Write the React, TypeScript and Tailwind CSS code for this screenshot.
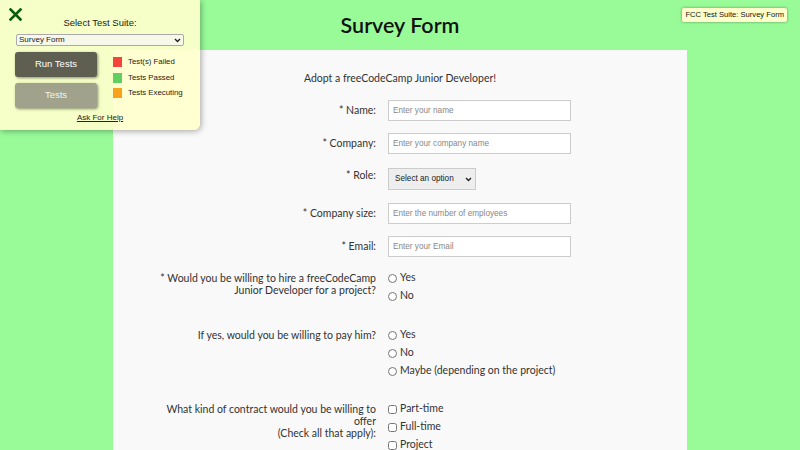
import { useState } from "react";

const font = { fontFamily: "Lato, 'Open Sans', sans-serif" };
const arial = { fontFamily: "'Liberation Sans', Arial, sans-serif" };

function Chevron({ className = "" }: { className?: string }) {
  return (
    <svg className={className} width="7" height="5" viewBox="0 0 7 5">
      <path d="M1 1 L3.5 3.5 L6 1" fill="none" stroke="#222" strokeWidth="1.4" />
    </svg>
  );
}

function TestPanel() {
  const [suite, setSuite] = useState("Survey Form");
  return (
    <div
      className="absolute left-0 top-0 w-[200px] h-[130px] bg-[rgba(255,255,204,0.9)] rounded-br-md shadow-[1px_1px_6px_rgba(0,0,0,0.35)] text-[#222]"
      style={arial}
    >
      <svg className="absolute left-[9px] top-[8px]" width="13" height="13" viewBox="0 0 13 13">
        <path d="M1.5 1.5 L11.5 11.5 M11.5 1.5 L1.5 11.5" stroke="#0a5c0a" strokeWidth="2.6" strokeLinecap="square" />
      </svg>
      <div className="pt-[16px] text-center text-[9.5px] leading-[14px]">Select Test Suite:</div>
      <div className="relative mx-[16px] mt-[4px]">
        <select
          value={suite}
          onChange={(e) => setSuite(e.target.value)}
          className="block w-full h-[12px] appearance-none text-[8px] leading-[10px] bg-[#f7f7ea] border border-[#aaa] rounded-[2px] px-[2px] py-0"
        >
          <option>Survey Form</option>
        </select>
        <Chevron className="absolute right-[3px] top-[4px] pointer-events-none" />
      </div>
      <div className="flex mt-[6px] pl-[15px]">
        <div className="flex flex-col gap-[6px] w-[82px]">
          <button className="h-[25px] rounded-[3px] bg-[#5e5f50] text-white text-[9.5px] shadow-[1px_1px_3px_rgba(0,0,0,0.45)]">
            Run Tests
          </button>
          <button className="h-[25px] rounded-[3px] bg-[#a0a28b] text-[#f4f4ea] text-[9.5px] shadow-[1px_1px_3px_rgba(0,0,0,0.45)]">
            Tests
          </button>
        </div>
        <div className="ml-[16px] mt-[5px] flex flex-col gap-[5.5px] text-[7.8px] leading-[10px]">
          <div className="flex items-center gap-[6px]">
            <span className="w-[9px] h-[10px] bg-[#f5443b]" />
            Test(s) Failed
          </div>
          <div className="flex items-center gap-[6px]">
            <span className="w-[9px] h-[10px] bg-[#5fd05f]" />
            Tests Passed
          </div>
          <div className="flex items-center gap-[6px]">
            <span className="w-[9px] h-[10px] bg-[#f8a11c]" />
            Tests Executing
          </div>
        </div>
      </div>
      <div className="mt-[5px] text-center text-[8px] leading-[10px] underline">Ask For Help</div>
    </div>
  );
}

function Label({ children, className = "" }: { children: React.ReactNode; className?: string }) {
  return <div className={`w-[263px] shrink-0 text-right text-[10.5px] text-[#333] ${className}`}>{children}</div>;
}

function TextRow({ label, placeholder, className = "" }: { label: string; placeholder: string; className?: string }) {
  return (
    <div className={`flex items-center gap-[12px] ${className}`}>
      <Label>{label}</Label>
      <input
        placeholder={placeholder}
        className="w-[183px] h-[21px] bg-white border border-[#ccc] px-[4px] text-[8.2px] placeholder:text-[#888]"
        style={arial}
      />
    </div>
  );
}

function Option({ type, label }: { type: "radio" | "checkbox"; label: string }) {
  return (
    <label className="flex items-center h-[18px] gap-[3px] text-[10.5px] text-[#333]">
      <input type={type} className="w-[9px] h-[9px] m-0 accent-gray-500" />
      {label}
    </label>
  );
}

export default function App() {
  return (
    <div className="relative h-[450px] bg-[#98fb98] overflow-hidden" style={font}>
      <TestPanel />
      <div
        className="absolute right-[13px] top-[8px] bg-[#ffffcc] text-[7.6px] leading-[14px] px-[3px] rounded-[2px] shadow-[0_0_3px_rgba(0,0,0,0.4)] text-[#111]"
        style={arial}
      >
        FCC Test Suite: Survey Form
      </div>
      <h1 className="h-[50px] flex items-center justify-center text-[21.5px] font-semibold text-[#111]">Survey Form</h1>
      <div className="w-[574px] mx-auto bg-[#f9f9f9] pt-[20px] pb-[40px]">
        <p className="text-center text-[10.5px] leading-[16px] text-[#333] mb-[14px]">Adopt a freeCodeCamp Junior Developer!</p>
        <TextRow label="* Name:" placeholder="Enter your name" />
        <TextRow label="* Company:" placeholder="Enter your company name" className="mt-[12px]" />
        <div className="flex gap-[12px] mt-[14px]">
          <Label>* Role:</Label>
          <div className="relative">
            <select
              className="block h-[22px] w-[88px] appearance-none bg-[#eee] border border-[#ccc] text-[8.2px] pl-[6px] pr-[16px] text-[#222]"
              style={arial}
            >
              <option>Select an option</option>
            </select>
            <Chevron className="absolute right-[4px] top-[9px] pointer-events-none" />
          </div>
        </div>
        <TextRow label="* Company size:" placeholder="Enter the number of employees" className="mt-[13px]" />
        <TextRow label="* Email:" placeholder="Enter your Email" className="mt-[12px]" />
        <div className="flex gap-[12px] mt-[12px]">
          <Label className="leading-[12px] pt-[3px]">
            * Would you be willing to hire a freeCodeCamp
            <br />
            Junior Developer for a project?
          </Label>
          <div>
            <Option type="radio" label="Yes" />
            <Option type="radio" label="No" />
          </div>
        </div>
        <div className="flex gap-[12px] mt-[21px]">
          <Label className="leading-[12px] pt-[3px]">If yes, would you be willing to pay him?</Label>
          <div>
            <Option type="radio" label="Yes" />
            <Option type="radio" label="No" />
            <Option type="radio" label="Maybe (depending on the project)" />
          </div>
        </div>
        <div className="flex gap-[12px] mt-[20px]">
          <Label className="leading-[12px] pt-[3px]">
            What kind of contract would you be willing to
            <br />
            offer
            <br />
            (Check all that apply):
          </Label>
          <div>
            <Option type="checkbox" label="Part-time" />
            <Option type="checkbox" label="Full-time" />
            <Option type="checkbox" label="Project" />
          </div>
        </div>
      </div>
    </div>
  );
}
